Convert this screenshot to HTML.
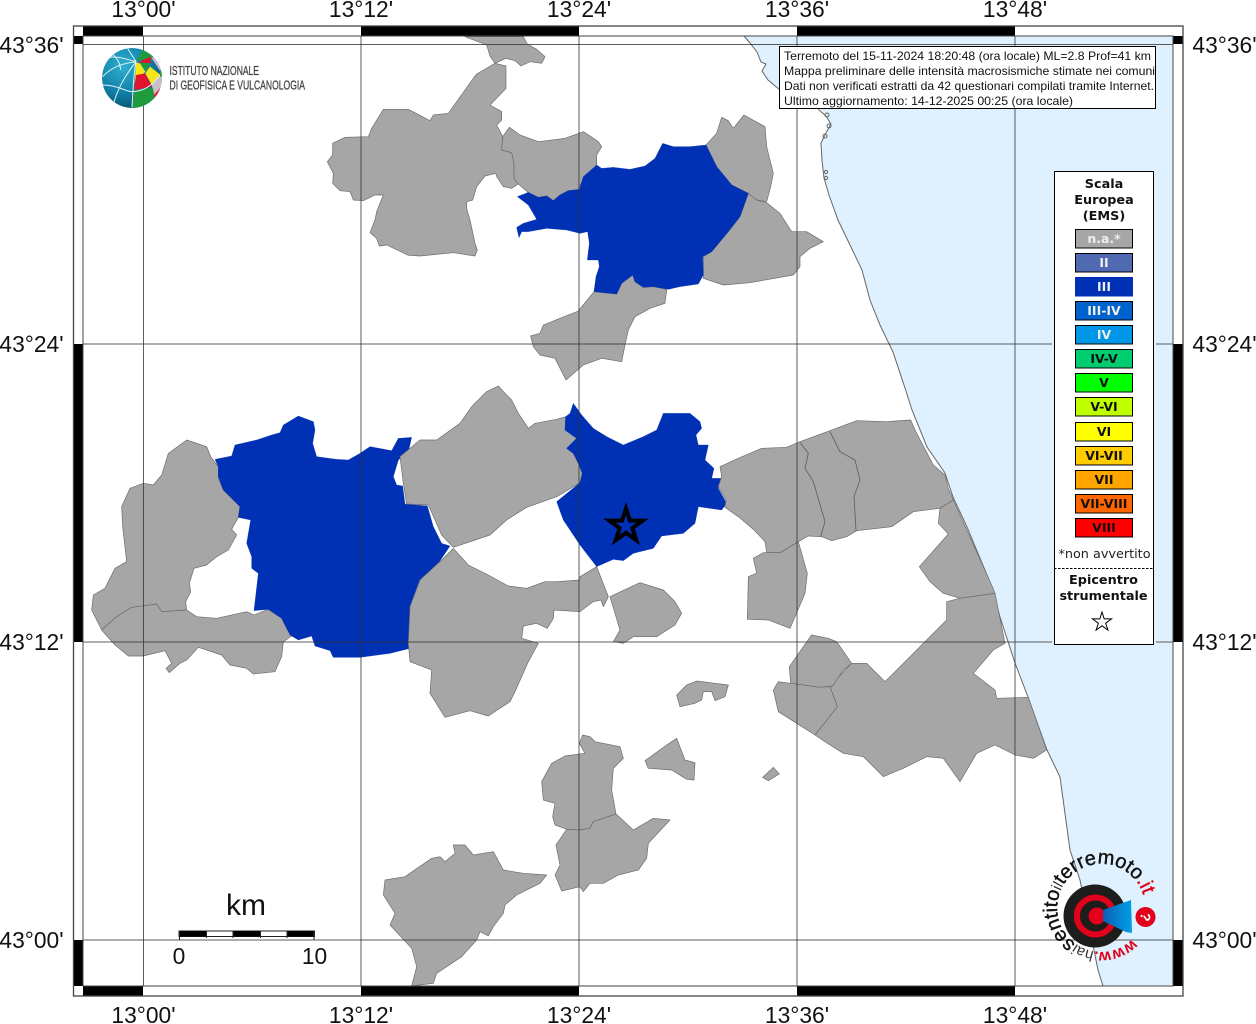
<!DOCTYPE html>
<html>
<head>
<meta charset="utf-8">
<title>Terremoto</title>
<style>
html,body{margin:0;padding:0;background:#fff;width:1256px;height:1024px;overflow:hidden}
svg{display:block}
.r{fill:#a6a6a6;stroke:#6a6a6a;stroke-width:2;stroke-linejoin:round}
.b{fill:#0030b4;stroke:#0030b4;stroke-width:1;stroke-linejoin:round}
.i{fill:none;stroke:#5c5c5c;stroke-width:2.4}
.t{font-family:"Liberation Sans",sans-serif;font-size:22.8px;fill:#111;text-anchor:middle}
.l{font-family:"DejaVu Sans",sans-serif;font-size:12.8px;font-weight:bold;fill:#111;text-anchor:middle}
.s{font-family:"DejaVu Sans",sans-serif;font-size:12.5px;font-weight:bold;text-anchor:middle}
.m{font-family:"Liberation Sans",sans-serif;font-size:12px;fill:#111}
</style>
</head>
<body>
<svg width="1256" height="1024" viewBox="0 0 1256 1024" xmlns="http://www.w3.org/2000/svg">
<defs>
<radialGradient id="gl" cx="35%" cy="30%" r="75%"><stop offset="0" stop-color="#2fb0d0"/><stop offset=".6" stop-color="#117fa8"/><stop offset="1" stop-color="#07506f"/></radialGradient>
<linearGradient id="cone" x1="0" x2="1" y1="0" y2="0"><stop offset="0" stop-color="#0a5fb5"/><stop offset="1" stop-color="#009fe6"/></linearGradient>
<clipPath id="gc"><circle cx="216" cy="174" r="90"/></clipPath>
<path id="arc" d="M1132.2 939 A44 44 0 1 1 1132.3 938.9"/>
</defs>
<rect width="1256" height="1024" fill="#fff"/>

<!-- sea -->
<polygon fill="#dff1ff" points="744,36 750,43 757,52 761,62 766,64 762,71 768,80 780,90 800,104 822,110 829,122 827,135 820,143 822,160 824,178 829,195 838,220 850,245 862,270 870,300 880,325 893,352 905,388 912,410 927,447 945,473 953,497 967,527 992,587 1000,617 1015,663 1028,697 1047,750 1060,777 1070,850 1080,880 1098,970 1103,986 1173,986 1173,36"/>
<polyline fill="none" stroke="#666" stroke-width="1" points="744,36 750,43 757,52 761,62 766,64 762,71 768,80 780,90"/>
<polyline fill="none" stroke="#666" stroke-width="1" points="818,109 826,116 831,124 826,133 821,143 822,160 824,178 829,195 838,220 850,245 862,270 870,300 880,325 893,352 905,388 912,410 927,447 945,473 953,497 967,527 992,587 1000,617 1015,663 1028,697 1047,750 1060,777 1070,850 1080,880 1098,970 1103,986"/>
<g fill="none" stroke="#666" stroke-width="1"><circle cx="829" cy="126" r="2"/><circle cx="825" cy="136" r="2"/><circle cx="827" cy="115" r="2"/><circle cx="826" cy="172" r="1.6"/><circle cx="826" cy="178" r="1.6"/></g>

<!-- zoom 9 regions -->
<g transform="translate(320,30) scale(.33333)">
<polygon class="r" points="435,20 610,20 622,42 650,58 675,80 665,100 630,95 603,108 585,92 558,85 525,100 510,78 500,45"/>
<polygon class="r" points="525,100 558,108 558,175 510,225 545,245 545,270 530,285 548,320 545,360 575,368 582,400 582,445 595,462 575,475 550,470 530,440 527,430 495,438 470,470 458,510 440,515 440,535 450,570 465,640 472,660 465,678 400,668 300,678 265,676 200,645 178,648 170,625 150,608 165,570 170,545 190,495 165,495 130,512 100,510 90,485 60,482 38,460 40,430 22,395 38,375 38,340 75,322 145,320 155,295 190,238 220,238 265,238 330,272 340,255 385,250 460,145 470,132"/>
<polygon class="r" points="568,292 600,315 655,335 735,325 790,305 835,335 845,350 830,375 830,405 780,465 775,480 745,482 720,495 700,512 680,498 655,502 625,488 595,462 582,445 582,400 575,368 545,360 548,320"/>
<polygon class="r" points="1158,345 1190,310 1205,262 1225,272 1240,295 1272,255 1335,290 1340,350 1360,430 1352,470 1340,515 1310,510 1285,490 1235,465 1190,410"/>
<polygon class="r" points="1285,490 1310,510 1340,518 1380,550 1415,605 1460,605 1510,635 1470,655 1440,680 1440,710 1420,735 1290,758 1210,765 1150,745 1150,680 1175,665 1225,605 1260,560"/>
<polygon class="r" points="822,785 890,792 905,760 938,735 945,755 970,772 1000,770 1040,778 1035,820 990,835 945,860 925,900 915,945 905,995 845,985 790,1005 738,1050 705,985 660,975 640,950 632,918 660,910 670,885 720,865 775,843"/>
<polygon class="b" points="1028,340 1060,350 1110,350 1158,345 1190,410 1235,465 1285,490 1260,560 1225,605 1175,665 1148,680 1150,735 1135,762 1080,770 1045,778 1000,770 970,772 945,755 938,735 905,760 890,792 822,785 828,740 838,710 835,690 802,690 808,640 803,605 780,610 740,600 680,595 625,605 605,605 597,623 590,592 610,580 650,568 625,525 592,500 625,487 655,502 680,498 700,512 720,495 745,482 778,478 790,440 830,405 845,415 880,412 930,418 975,408 1005,385"/>
</g>

<!-- zoom 7 regions -->
<g transform="translate(90,400) scale(.33333)">
<polygon class="r" points="290,120 350,140 362,170 385,200 385,235 400,270 450,320 445,352 425,388 440,405 415,450 380,470 350,495 312,505 298,550 302,575 287,605 290,630 215,635 200,612 160,622 125,622 80,650 35,690 5,630 10,585 45,565 75,505 110,485 98,380 95,320 120,265 160,250 190,255 215,225 235,160"/>
<polygon class="r" points="35,690 80,650 125,622 200,612 215,635 290,630 320,650 380,655 470,635 492,645 535,628 575,655 590,685 605,708 580,725 575,770 555,815 490,822 470,805 420,795 395,765 325,742 290,780 270,790 238,818 228,805 245,790 225,752 160,768 115,768 75,735"/>
<polygon class="b" points="375,178 425,168 435,135 500,120 545,105 570,98 580,75 625,48 670,65 675,90 668,130 680,170 740,178 775,180 810,160 840,140 905,152 925,115 965,112 955,155 925,180 910,230 920,255 938,258 945,312 1012,318 1030,380 1055,430 1080,438 1045,490 1025,520 985,560 965,605 958,715 960,745 900,760 810,772 730,772 720,752 675,738 665,708 625,720 600,705 590,685 575,655 535,628 492,632 505,520 485,505 485,470 470,430 482,360 445,352 450,320 400,270 385,230 385,200"/>
</g>

<!-- zoom 8 regions -->
<g transform="translate(400,380) scale(.33333)">
<polygon class="r" points="295,18 315,40 335,60 355,100 385,145 405,130 470,118 497,110 495,150 530,175 500,205 520,220 535,250 547,280 540,308 470,350 380,382 320,420 270,465 160,502 125,465 85,375 20,372 10,310 0,230 60,180 110,180 180,130 215,80 260,35"/>
<polygon class="r" points="160,505 205,555 265,585 325,618 380,625 435,605 470,605 540,600 540,590 590,560 625,650 610,680 603,660 580,665 540,695 462,690 460,715 442,745 410,730 370,738 365,775 415,790 385,845 345,935 330,965 265,1008 210,992 135,1012 90,940 95,870 30,845 25,790 30,680 60,600 125,540"/>
<polygon class="r" points="630,650 720,608 790,630 825,665 845,700 825,735 770,770 700,770 670,790 640,785 660,750 645,700"/>
<polygon class="r" points="830,945 860,915 890,903 945,910 985,915 975,950 945,962 935,935 910,935 905,960 885,970 840,980"/>
<polygon class="b" points="520,70 545,105 580,145 620,170 670,195 730,170 770,150 790,100 870,100 900,125 905,145 888,165 895,195 925,195 915,240 942,265 935,295 965,295 955,325 980,370 965,390 895,380 885,430 850,460 785,468 760,505 700,520 670,542 640,538 590,560 540,495 490,420 470,365 540,308 547,280 535,250 520,220 500,205 530,175 495,150 497,110 510,100"/>
</g>

<!-- zoom 10 regions -->
<g transform="translate(700,410) scale(.33333)">
<polygon class="r" points="60,170 115,145 185,115 260,112 300,95 390,62 470,32 560,35 632,30 650,70 700,165 735,195 745,235 760,270 720,295 640,305 575,350 470,362 440,380 395,392 365,380 325,378 295,395 240,428 200,428 195,395 160,358 115,320 75,292 78,270 55,230 65,200"/>
<polyline class="i" points="300,98 325,130 315,175 340,215 375,335 362,380"/>
<polyline class="i" points="390,65 420,125 465,150 480,210 462,260 468,362"/>
<polygon class="r" points="720,295 760,270 878,532 885,550 780,565 730,550 690,515 658,470 745,372 715,340"/>
<polygon class="r" points="190,428 240,428 295,395 322,490 315,550 270,655 205,630 142,628 145,500 170,490 160,445"/>
<polygon class="r" points="780,565 885,550 915,700 880,720 820,790 885,840 890,865 985,862 1040,1020 1000,1045 945,1035 885,1005 830,1030 780,1115 730,1045 680,1040 610,1075 550,1100 490,1040 430,1030 375,995 345,975 412,890 390,830 435,780 455,760 500,760 555,815 740,630 740,575"/>
<polygon class="r" points="335,675 385,685 410,695 455,760 430,780 398,828 360,832 272,820 268,770 310,710"/>
<polygon class="r" points="272,820 360,832 390,830 412,890 345,975 290,940 235,905 220,840 235,815"/>
</g>

<!-- zoom 11 regions -->
<g transform="translate(370,730) scale(.33333)">
<polygon class="r" points="45,450 105,440 185,385 210,380 225,395 255,370 250,345 285,345 310,375 370,365 400,420 460,430 530,435 510,460 440,495 405,525 400,550 370,590 355,618 330,605 320,630 275,680 200,730 190,760 125,768 140,710 125,655 60,585 75,550 40,495"/>
<polygon class="r" points="638,15 660,20 675,35 750,50 760,85 730,115 725,180 738,252 670,275 660,295 630,300 590,298 555,285 548,260 555,220 520,210 515,155 545,100 585,78 645,70 628,40"/>
<polygon class="r" points="590,298 630,300 660,295 670,275 738,252 790,300 850,265 900,270 835,340 830,385 805,420 745,435 700,460 660,460 640,485 630,470 575,483 555,435 570,405 558,345"/>
<polygon class="r" points="825,92 890,45 920,25 945,90 975,98 972,150 950,148 905,120 835,115"/>
<polygon class="r" points="1178,142 1210,112 1228,132 1195,152"/>
</g>

<!-- star -->
<polygon fill="#0030b4" stroke="#000" stroke-width="4" stroke-miterlimit="10" points="626,508.5 629.9,520.6 642.6,520.6 632.4,528.1 636.3,540.2 626,532.7 615.7,540.2 619.6,528.1 609.4,520.6 622.1,520.6"/>

<!-- grid -->
<g stroke="#333" stroke-opacity=".8" stroke-width="1">
<line x1="143.5" y1="36" x2="143.5" y2="986"/>
<line x1="361" y1="36" x2="361" y2="986"/>
<line x1="579" y1="36" x2="579" y2="986"/>
<line x1="797" y1="36" x2="797" y2="986"/>
<line x1="1015" y1="36" x2="1015" y2="986"/>
<line x1="83" y1="44.5" x2="1173" y2="44.5"/>
<line x1="83" y1="344" x2="1052" y2="344"/>
<line x1="1156" y1="344" x2="1173" y2="344"/>
<line x1="83" y1="642" x2="1052" y2="642"/>
<line x1="1156" y1="642" x2="1173" y2="642"/>
<line x1="83" y1="940" x2="1173" y2="940"/>
</g>

<!-- frame -->
<g fill="#000">
<rect x="83" y="26" width="60" height="10"/><rect x="361" y="26" width="218" height="10"/><rect x="797" y="26" width="218" height="10"/>
<rect x="83" y="986" width="60" height="10"/><rect x="361" y="986" width="218" height="10"/><rect x="797" y="986" width="218" height="10"/>
<rect x="74" y="36" width="9" height="8"/><rect x="74" y="344" width="9" height="298"/><rect x="74" y="940" width="9" height="46"/>
<rect x="1173" y="36" width="10" height="8"/><rect x="1173" y="344" width="10" height="298"/><rect x="1173" y="940" width="10" height="46"/>
</g>
<rect x="73.5" y="26" width="1109.5" height="970" fill="none" stroke="#444" stroke-width="1.3"/>
<rect x="83" y="36" width="1090" height="950" fill="none" stroke="#444" stroke-width="1"/>

<!-- tick labels -->
<g class="t">
<text class="t" x="143.5" y="17">13°00'</text><text class="t" x="361" y="17">13°12'</text><text class="t" x="579" y="17">13°24'</text><text class="t" x="797" y="17">13°36'</text><text class="t" x="1015" y="17">13°48'</text>
<text class="t" x="143.5" y="1023">13°00'</text><text class="t" x="361" y="1023">13°12'</text><text class="t" x="579" y="1023">13°24'</text><text class="t" x="797" y="1023">13°36'</text><text class="t" x="1015" y="1023">13°48'</text>
<text class="t" x="31.5" y="53">43°36'</text><text class="t" x="31.5" y="352">43°24'</text><text class="t" x="31.5" y="650">43°12'</text><text class="t" x="31.5" y="948">43°00'</text>
<text class="t" x="1224.5" y="53">43°36'</text><text class="t" x="1224.5" y="352">43°24'</text><text class="t" x="1224.5" y="650">43°12'</text><text class="t" x="1224.5" y="948">43°00'</text>
</g>

<!-- info box -->
<rect x="779.5" y="46.5" width="376" height="62" fill="#fff" stroke="#000" stroke-width="1"/>
<text class="m" x="784" y="60" textLength="367" lengthAdjust="spacingAndGlyphs">Terremoto del 15-11-2024 18:20:48 (ora locale) ML=2.8 Prof=41 km</text>
<text class="m" x="784" y="75" textLength="371" lengthAdjust="spacingAndGlyphs">Mappa preliminare delle intensità macrosismiche stimate nei comuni</text>
<text class="m" x="784" y="90" textLength="370" lengthAdjust="spacingAndGlyphs">Dati non verificati estratti da 42 questionari compilati tramite Internet.</text>
<text class="m" x="784" y="105" textLength="289" lengthAdjust="spacingAndGlyphs">Ultimo aggiornamento: 14-12-2025 00:25 (ora locale)</text>

<!-- legend -->
<rect x="1054.5" y="171.5" width="99" height="473" fill="#fff" stroke="#000" stroke-width="1"/>
<text class="l" x="1104" y="188">Scala</text>
<text class="l" x="1104" y="204">Europea</text>
<text class="l" x="1104" y="220">(EMS)</text>
<g stroke="#000" stroke-width="1">
<rect x="1075.5" y="229.5" width="57" height="18.5" fill="#a6a6a6"/>
<rect x="1075.5" y="253.5" width="57" height="18.5" fill="#4f6ab0"/>
<rect x="1075.5" y="277.5" width="57" height="18.5" fill="#0030b4" stroke="#0030b4"/>
<rect x="1075.5" y="301.5" width="57" height="18.5" fill="#0062cc"/>
<rect x="1075.5" y="325.5" width="57" height="18.5" fill="#0096e8"/>
<rect x="1075.5" y="349.5" width="57" height="18.5" fill="#00cc70"/>
<rect x="1075.5" y="373.5" width="57" height="18.5" fill="#00ff00"/>
<rect x="1075.5" y="397.5" width="57" height="18.5" fill="#c0ff00"/>
<rect x="1075.5" y="422.5" width="57" height="18.5" fill="#ffff00"/>
<rect x="1075.5" y="446.5" width="57" height="18.5" fill="#ffcc00"/>
<rect x="1075.5" y="470.5" width="57" height="18.5" fill="#ffa500"/>
<rect x="1075.5" y="494.5" width="57" height="18.5" fill="#ff6600"/>
<rect x="1075.5" y="518.5" width="57" height="18.5" fill="#ff0000"/>
</g>
<g>
<text class="s" x="1104" y="243" fill="#eee">n.a.*</text>
<text class="s" x="1104" y="267" fill="#eee">II</text>
<text class="s" x="1104" y="291" fill="#eee">III</text>
<text class="s" x="1104" y="315" fill="#eee">III-IV</text>
<text class="s" x="1104" y="339" fill="#eee">IV</text>
<text class="s" x="1104" y="363" fill="#111">IV-V</text>
<text class="s" x="1104" y="387" fill="#111">V</text>
<text class="s" x="1104" y="411" fill="#111">V-VI</text>
<text class="s" x="1104" y="436" fill="#111">VI</text>
<text class="s" x="1104" y="460" fill="#111">VI-VII</text>
<text class="s" x="1104" y="484" fill="#111">VII</text>
<text class="s" x="1104" y="508" fill="#111">VII-VIII</text>
<text class="s" x="1104" y="532" fill="#111">VIII</text>
</g>
<text x="1104.5" y="558" text-anchor="middle" font-family="'DejaVu Sans',sans-serif" font-size="12.8" fill="#222">*non avvertito</text>
<line x1="1054" y1="568.5" x2="1154" y2="568.5" stroke="#000" stroke-width="1" stroke-dasharray="2.5,1.5"/>
<text class="l" x="1103.5" y="584">Epicentro</text>
<text class="l" x="1103.5" y="600">strumentale</text>
<polygon fill="#fff" stroke="#000" stroke-width="1" points="1102,612 1104.2,618.9 1111.5,618.9 1105.6,623.2 1107.9,630.1 1102,625.8 1096.1,630.1 1098.4,623.2 1092.5,618.9 1099.8,618.9"/>

<!-- scale bar -->
<text x="246" y="915" text-anchor="middle" font-family="'Liberation Sans',sans-serif" font-size="30" fill="#111">km</text>
<rect x="179" y="931" width="135.5" height="5.5" fill="#fff" stroke="#222" stroke-width="1"/>
<g fill="#000"><rect x="179" y="931" width="27.5" height="5.5"/><rect x="233" y="931" width="27.5" height="5.5"/><rect x="287" y="931" width="27.5" height="5.5"/></g>
<g stroke="#222" stroke-width="1"><line x1="179.5" y1="931" x2="179.5" y2="940"/><line x1="206.5" y1="931" x2="206.5" y2="938"/><line x1="233" y1="931" x2="233" y2="938"/><line x1="260.5" y1="931" x2="260.5" y2="938"/><line x1="287" y1="931" x2="287" y2="938"/><line x1="314" y1="931" x2="314" y2="940"/></g>
<text class="t" x="179" y="964">0</text>
<text class="t" x="314.5" y="964">10</text>

<!-- INGV logo -->
<g transform="translate(60,20) scale(.33333)">
<g clip-path="url(#gc)">
<circle cx="216" cy="174" r="90" fill="url(#gl)"/>
<polygon fill="#c9bccb" points="270,90 320,130 320,240 285,235 275,195 305,160 272,110"/>
<polygon fill="#1f9a3e" points="228,125 248,88 285,112 272,112"/>
<polygon fill="#e3122d" points="232,128 272,110 272,130 245,128"/>
<polygon fill="#f5e61a" points="228,128 240,130 256,155 224,190"/>
<polygon fill="#1f9a3e" points="240,128 272,130 256,155"/>
<polygon fill="#f5e61a" points="270,140 302,165 276,196 256,160"/>
<polygon fill="#e3122d" points="228,165 255,160 276,200 222,210"/>
<polygon fill="#1f9a3e" points="222,212 278,202 286,238 240,270 216,270"/>
<polygon fill="#e3122d" points="300,205 310,210 285,235 282,225"/>
<polygon fill="#1f9a3e" points="300,150 310,155 310,170 300,170"/>
<g fill="none" stroke="#dff3f7" stroke-width="3">
<path d="M228 125 C222 115 212 100 203 86"/>
<path d="M228 125 C200 118 175 108 150 112"/>
<path d="M228 125 C190 130 155 140 128 170"/>
<path d="M228 125 C222 155 220 190 216 262"/>
<path d="M158 265 C165 225 185 180 228 125"/>
<path d="M160 105 C175 120 180 130 182 150"/>
<path d="M128 195 C170 195 200 215 216 215 C245 214 270 205 300 165"/>
</g>
</g>
</g>
<text x="169.5" y="75" font-family="'Liberation Sans',sans-serif" font-size="13" fill="#444" stroke="#444" stroke-width=".3" textLength="89.5" lengthAdjust="spacingAndGlyphs">ISTITUTO NAZIONALE</text>
<text x="169.5" y="89.5" font-family="'Liberation Sans',sans-serif" font-size="13" fill="#444" stroke="#444" stroke-width=".3" textLength="135.5" lengthAdjust="spacingAndGlyphs">DI GEOFISICA E VULCANOLOGIA</text>

<!-- hai sentito logo -->
<circle cx="1095" cy="916" r="31.5" fill="#1d1d1b"/>
<path d="M1111.6 907 A18.5 18.5 0 1 0 1111.6 925" fill="none" stroke="#e2001a" stroke-width="6"/>
<circle cx="1097" cy="916" r="8.5" fill="#e2001a"/>
<polygon fill="url(#cone)" points="1103,910 1131,900 1132,933 1126,932 1103,921"/>
<circle cx="1145.5" cy="917" r="10" fill="#e2001a"/>
<text x="1145.5" y="922" text-anchor="middle" transform="rotate(100 1145.5 917)" font-family="'Liberation Sans',sans-serif" font-size="14" font-weight="bold" fill="#fff">?</text>
<text font-family="'Liberation Sans',sans-serif" font-size="20" fill="#111">
<textPath href="#arc" startOffset="0"><tspan fill="#e2001a" font-weight="bold" font-size="16">www.</tspan><tspan fill="#333" font-size="15">hai</tspan><tspan font-size="20" stroke="#111" stroke-width=".4">sentito</tspan><tspan font-size="15" fill="#333">il</tspan><tspan font-size="20" stroke="#111" stroke-width=".4">terremoto</tspan><tspan fill="#e2001a" font-size="20" stroke="#e2001a" stroke-width=".4">.it</tspan></textPath>
</text>
</svg>
</body>
</html>
